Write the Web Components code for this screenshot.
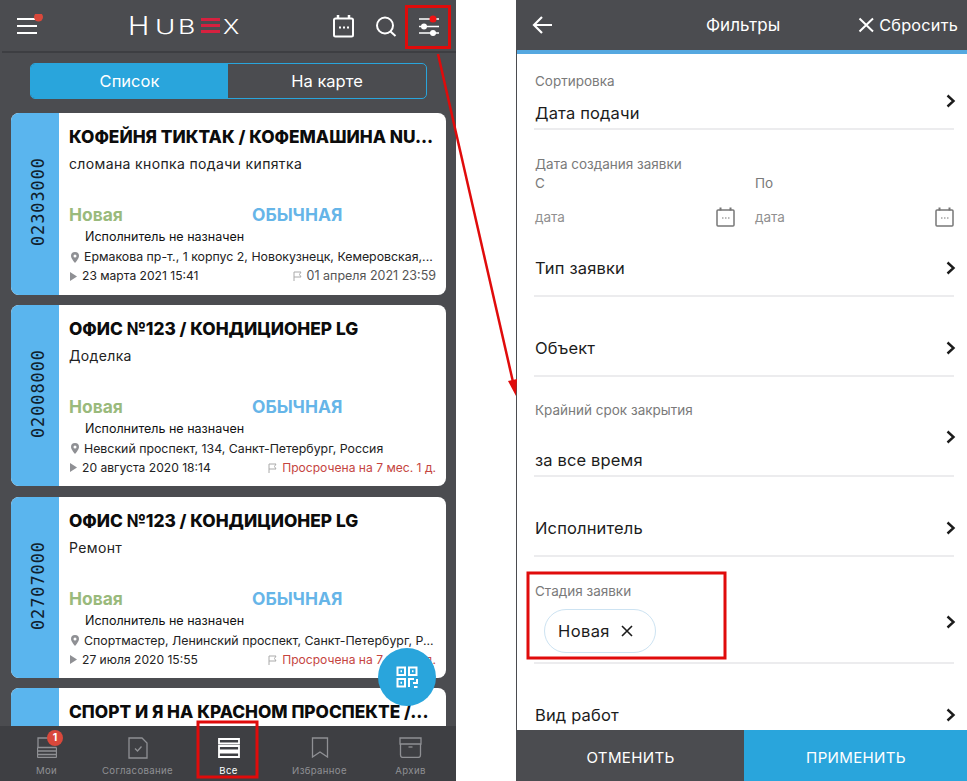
<!DOCTYPE html>
<html lang="ru">
<head>
<meta charset="utf-8">
<title>Hubex</title>
<style>
  html, body { margin: 0; padding: 0; background: #fff; }
  body { width: 967px; height: 781px; overflow: hidden; font-family: Inter, "Noto Sans", sans-serif; }
</style>
</head>
<body>
<hubex-screens>
  <list-panel slot="left">
    <task-card number="02303000" addr="Ермакова пр-т., 1 корпус 2, Новокузнецк, Кемеровская,..." created="23 марта 2021 15:41" due="01 апреля 2021 23:59">
      КОФЕЙНЯ ТИКТАК / КОФЕМАШИНА NU...
      <span slot="desc">сломана кнопка подачи кипятка</span>
    </task-card>
    <task-card number="02008000" addr="Невский проспект, 134, Санкт-Петербург, Россия" created="20 августа 2020 18:14" due="Просрочена на 7 мес. 1 д." overdue>
      ОФИС №123 / КОНДИЦИОНЕР LG
      <span slot="desc">Доделка</span>
    </task-card>
    <task-card number="02707000" addr="Спортмастер, Ленинский проспект, Санкт-Петербург, Р..." created="27 июля 2020 15:55" due="Просрочена на 7 мес. 1 д." overdue>
      ОФИС №123 / КОНДИЦИОНЕР LG
      <span slot="desc">Ремонт</span>
    </task-card>
    <task-card number="" addr="" created="" due="">
      СПОРТ И Я НА КРАСНОМ ПРОСПЕКТЕ /...
    </task-card>
  </list-panel>
  <filter-panel slot="right">
    <filter-row label="Сортировка" value="Дата подачи" height="76" pad="5" chev="15"></filter-row>
    <date-range></date-range>
    <filter-row value="Тип заявки" height="57" pad="17" chev="3"></filter-row>
    <filter-row value="Объект" height="80" pad="17" chev="3"></filter-row>
    <filter-row label="Крайний срок закрытия" value="за все время" height="100" gap="32" pad="5" chev="26"></filter-row>
    <filter-row value="Исполнитель" height="80" pad="17" chev="3"></filter-row>
    <filter-row label="Стадия заявки" height="107" gap="12" pad="9" chev="24"><stage-chip>Новая</stage-chip></filter-row>
    <filter-row value="Вид работ" height="80" pad="17" chev="3" flat></filter-row>
  </filter-panel>
</hubex-screens>

<script>
const SANS = 'Inter, "Noto Sans", sans-serif';

class HubexScreens extends HTMLElement {
  constructor() {
    super();
    this.attachShadow({ mode: 'open' });
    this.shadowRoot.innerHTML = `
      <style>
        :host { display: flex; position: relative; width: 967px; height: 781px; overflow: hidden; }
        ::slotted([slot=left]) { width: 456px; flex: none; }
        ::slotted([slot=right]) { width: 451px; flex: none; margin-left: 60px; }
        svg { position: absolute; left: 0; top: 0; pointer-events: none; }
      </style>
      <slot name="left"></slot>
      <slot name="right"></slot>
      <svg width="967" height="781" fill="none" stroke="#e00b0b" stroke-width="3">
        <rect x="406.5" y="6.5" width="43" height="41"/>
        <rect x="198" y="722" width="59" height="55"/>
        <rect x="528" y="573" width="197" height="85"/>
        <path d="M438 54 L513 382" stroke-width="2.5"/>
        <path d="M516 396 L508 381 L517 379 Z" fill="#e00b0b" stroke="none"/>
      </svg>`;
  }
}

class ListPanel extends HTMLElement {
  constructor() {
    super();
    this.attachShadow({ mode: 'open' });
    this.shadowRoot.innerHTML = `
      <style>
        :host { display: flex; flex-direction: column; position: relative; height: 781px; background: #4b4c50; overflow: hidden; font-family: ${SANS}; }
        header { flex: none; height: 51px; position: relative; border-bottom: 2px solid #3d3e42; margin-left: 2px; }
        header > * { position: absolute; }
        .burger { left: 15px; top: 14px; }
        hubex-logo { left: 126px; top: 12px; }
        .cal { left: 329px; top: 14px; }
        .search { left: 372px; top: 14px; }
        .sliders { left: 413px; top: 14px; }
        .toggle { flex: none; box-sizing: border-box; display: grid; grid-template-columns: 197px 1fr; height: 36px; margin: 10px 29px 14px 30px; border: 1px solid #29a5dc; border-radius: 5px; overflow: hidden; color: #fff; font-size: 16.500px; }
        .toggle div { display: flex; align-items: center; justify-content: center; }
        .toggle .on { background: #29a5dc; }
        .list { flex: 1; min-height: 0; overflow: hidden; display: flex; flex-direction: column; gap: 10.300px; padding: 0 10px 0 11px; }
        nav { flex: none; height: 55px; box-sizing: border-box; padding-left: 1px; display: grid; grid-template-columns: repeat(5, 91px); background: #3e3f43; }
        .fab { position: absolute; left: 378px; top: 648px; width: 58px; height: 58px; border-radius: 50%; background: #29a5dc; display: flex; align-items: center; justify-content: center; }
      </style>
      <header>
        <svg class="burger" width="32" height="24" fill="none">
          <path d="M0 5H18M0 12H20M0 19H20" stroke="#fff" stroke-width="2"/>
          <circle cx="21.500" cy="3" r="4.500" fill="#d9483b"/>
        </svg>
        <hubex-logo></hubex-logo>
        <svg class="cal" width="24" height="26" fill="none" stroke="#fff" stroke-width="2">
          <rect x="3" y="4.500" width="19" height="18" rx="1.500"/>
          <path d="M7 1V5M18 1V5" stroke-width="2.500"/>
          <path d="M8 13.500H10M12 13.500H14M16 13.500H18" stroke-width="2"/>
        </svg>
        <svg class="search" width="24" height="26" fill="none" stroke="#fff" stroke-width="2">
          <circle cx="11" cy="11.500" r="8"/>
          <path d="M16.500 17.500L21.500 22"/>
        </svg>
        <svg class="sliders" width="28" height="26" fill="none">
          <path d="M4 5H24M4 12.500H24M4 19H24" stroke="#fff" stroke-width="1.500"/>
          <circle cx="9" cy="12.500" r="3" fill="#fff"/>
          <circle cx="18" cy="19" r="3" fill="#fff"/>
          <circle cx="18" cy="5" r="3.500" fill="#f01414"/>
        </svg>
      </header>
      <div class="toggle"><div class="on">Список</div><div>На карте</div></div>
      <div class="list"><slot></slot></div>
      <nav>
        <tab-item label="Мои" badge="1" icon="mine"></tab-item>
        <tab-item label="Согласование" icon="doc"></tab-item>
        <tab-item label="Все" icon="all" active></tab-item>
        <tab-item label="Избранное" icon="mark"></tab-item>
        <tab-item label="Архив" icon="box"></tab-item>
      </nav>
      <div class="fab">
        <svg width="22" height="22" fill="none" stroke="#fff" stroke-width="2">
          <rect x="1.500" y="1.500" width="7.500" height="7.500"/>
          <rect x="13" y="1.500" width="7.500" height="7.500"/>
          <rect x="1.500" y="13" width="7.500" height="7.500"/>
          <path d="M13 21V13H18M21 13V17H17M18 21H21.500"/>
          <path d="M4.500 5.200H6M16 5.200H17.500M4.500 16.700H6" stroke-width="2"/>
        </svg>
      </div>`;
  }
}

class HubexLogo extends HTMLElement {
  constructor() {
    super();
    this.attachShadow({ mode: 'open' });
    this.shadowRoot.innerHTML = `
      <style>
        :host { display: flex; align-items: flex-end; height: 24px; color: #fff; font: 300 20.500px/19px ${SANS}; }
        span { display: block; height: 19px; transform-origin: 0 100%; }
        .h { width: 28px; font-size: 25px; transform: scaleX(1.150); }
        .u { width: 23px; margin-left: -1px; transform: scaleX(1.350); }
        .b { width: 21px; transform: scaleX(1.300); }
        .e { width: 19px; height: 15px; margin: 0 3px 3px 2px; background: repeating-linear-gradient(#d6213f 0 3px, transparent 3px 6px); transform: none; }
        .x { transform: scaleX(1.200); }
      </style>
      <span class="h">H</span><span class="u">U</span><span class="b">B</span><span class="e"></span><span class="x">X</span>`;
  }
}

const TAB_ICONS = {
  mine: `<svg width="20" height="21" stroke-width="1.300"><path d="M1 10.500V1H17V3"/><path d="M.500 10.500H19.500M.500 14H19.500M.500 17.500H19.500M.500 20.500H19.500M.500 10.500V20.500M19.500 10.500V20.500"/></svg>`,
  doc: `<svg width="20" height="22" stroke-width="1.300"><path d="M1 1H14L19 6V21H1Z"/><path d="M7 11.500L9.500 14L13.500 9.500"/></svg>`,
  all: `<svg width="22" height="21" stroke-width="1.800"><path d="M1 2H21V6.500H1ZM1 9H21V13.500H1ZM1 15.500H21V20H1Z"/></svg>`,
  mark: `<svg width="18" height="21" stroke-width="1.300"><path d="M1.500 1H16.500V20L9 15L1.500 20Z"/></svg>`,
  box: `<svg width="23" height="21" stroke-width="1.300"><path d="M1 1H22V7H1ZM1.500 7V18Q1.500 20.500 4 20.500H19Q21.500 20.500 21.500 18V7"/><path d="M9.500 10H13.500"/></svg>`
};

class TabItem extends HTMLElement {
  connectedCallback() {
    if (this.shadowRoot) return;
    this.attachShadow({ mode: 'open' });
    const active = this.hasAttribute('active');
    const badge = this.getAttribute('badge');
    this.shadowRoot.innerHTML = `
      <style>
        :host { display: flex; flex-direction: column; align-items: center; position: relative; color: ${active ? '#fff' : '#8f9094'}; font: 400 9.600px/12px ${SANS}; }
        .icon { margin-top: 11px; height: 21px; display: flex; align-items: center; justify-content: center; }
        svg { stroke: currentColor; fill: none; display: block; }
        .name { margin-top: 7px; white-space: nowrap; letter-spacing: .35px; }
        .badge { position: absolute; left: 46px; top: 4px; width: 16px; height: 16px; border-radius: 50%; background: #d9483b; color: #fff; font: 700 10.500px/16px ${SANS}; text-align: center; }
      </style>
      <div class="icon">${TAB_ICONS[this.getAttribute('icon')]}</div>
      <div class="name">${this.getAttribute('label')}</div>
      ${badge ? `<div class="badge">${badge}</div>` : ''}`;
  }
}

class TaskCard extends HTMLElement {
  connectedCallback() {
    if (this.shadowRoot) return;
    this.attachShadow({ mode: 'open' });
    const get = name => this.getAttribute(name) || '';
    const overdue = this.hasAttribute('overdue');
    const stub = !get('number');
    this.shadowRoot.innerHTML = `
      <style>
        :host { display: flex; flex: none; height: 181.500px; border-radius: 8px; background: #fff; overflow: hidden; font-family: ${SANS}; color: #111; }
        .num { flex: none; box-sizing: border-box; width: 48px; padding-left: 7px; background: #5ab5ee; display: flex; align-items: center; justify-content: center; }
        .num span { writing-mode: vertical-rl; transform: rotate(180deg); font: 400 17px/1 "DejaVu Sans Mono", monospace; letter-spacing: .9px; color: #10202c; margin-top: -4px; }
        .body { flex: 1; min-width: 0; padding: 14px 10px 0 10px; display: flex; flex-direction: column; }
        .title { font-size: 17.300px; line-height: 20px; font-weight: 800; white-space: nowrap; color: #0c0c0c; }
        .desc { font-size: 14px; line-height: 18px; margin-top: 8px; height: 18px; color: #222; letter-spacing: .36px; }
        .state { display: flex; margin-top: 32px; font-size: 17.400px; line-height: 20px; font-weight: 700; }
        .new { width: 183px; color: #9aba7c; }
        .prio { color: #66b5e8; }
        .who { font-size: 12.500px; line-height: 16px; margin: 4px 0 0 16px; }
        .addr { font-size: 12.350px; line-height: 16px; margin-top: 4px; white-space: nowrap; display: flex; align-items: center; gap: 5px; padding-left: 2px; color: #222; }
        .dates { font-size: 12.100px; line-height: 16px; margin-top: 3px; display: flex; align-items: center; white-space: nowrap; }
        .dates svg { flex: none; }
        .from { margin-left: 4px; color: #222; }
        .due { margin-left: auto; display: flex; align-items: center; gap: 5px; color: ${overdue ? '#c5453f' : '#555'}; font-size: ${overdue ? 12.1 : 12.5}px; }
      </style>
      <div class="num"><span>${get('number')}</span></div>
      <div class="body">
        <div class="title"><slot></slot></div>
        ${stub ? '' : `
        <div class="desc"><slot name="desc"></slot></div>
        <div class="state"><div class="new">Новая</div><div class="prio">ОБЫЧНАЯ</div></div>
        <div class="who">Исполнитель не назначен</div>
        <div class="addr">
          <svg width="8" height="11" viewBox="0 0 8 11"><path d="M4 0a4 4 0 0 1 4 4c0 2.500-4 7-4 7S0 6.500 0 4a4 4 0 0 1 4-4zm0 2.500a1.500 1.500 0 1 0 0 3 1.500 1.500 0 0 0 0-3z" fill="#8f9094" fill-rule="evenodd"/></svg>
          <span>${get('addr')}</span>
        </div>
        <div class="dates">
          <svg width="9" height="9"><path d="M1 0L8 4.500L1 9Z" fill="#8f9094"/></svg>
          <span class="from">${get('created')}</span>
          <span class="due">
            <svg width="9" height="10" fill="none"><path d="M1 10V1H8L6.500 3.500L8 6H1" stroke="#aaa" stroke-width="1"/></svg>
            <span>${get('due')}</span>
          </span>
        </div>`}
      </div>`;
  }
}

class FilterPanel extends HTMLElement {
  constructor() {
    super();
    this.attachShadow({ mode: 'open' });
    this.shadowRoot.innerHTML = `
      <style>
        :host { display: flex; flex-direction: column; position: relative; height: 781px; background: #fff; border-left: 1px solid #4b4c50; font-family: ${SANS}; overflow: hidden; }
        header { flex: none; height: 50px; background: #4b4c50; color: #fff; display: flex; align-items: center; position: relative; }
        .back { margin-left: 15px; }
        .title { position: absolute; left: 189px; top: 15px; line-height: 20px; font-size: 17px; }
        .reset { margin-left: auto; margin-right: 10px; display: flex; align-items: center; gap: 4px; font-size: 16.300px; letter-spacing: .2px; }
        .stripe { flex: none; height: 4px; background: #55a8e0; }
        .rows { flex: 1; min-height: 0; overflow: hidden; padding: 0 14px 0 17px; }
        footer { flex: none; height: 51px; display: grid; grid-template-columns: 227px 1fr; color: #fff; font-size: 15.100px; letter-spacing: .3px; }
        footer div { display: flex; align-items: center; justify-content: center; padding-top: 3px; }
        .cancel { background: #4b4c50; }
        .apply { background: #29a5dc; }
      </style>
      <header>
        <svg class="back" width="20" height="20" fill="none" stroke="#fff" stroke-width="2.200"><path d="M20 10H2M10 2L2 10L10 18"/></svg>
        <div class="title">Фильтры</div>
        <div class="reset">
          <svg width="17" height="16" fill="none" stroke="#fff" stroke-width="2"><path d="M1.500 1.500L15 14.500M15 1.500L1.500 14.500"/></svg>
          <span>Сбросить</span>
        </div>
      </header>
      <div class="stripe"></div>
      <div class="rows"><slot></slot></div>
      <footer><div class="cancel">ОТМЕНИТЬ</div><div class="apply">ПРИМЕНИТЬ</div></footer>`;
  }
}

class FilterRow extends HTMLElement {
  connectedCallback() {
    if (this.shadowRoot) return;
    this.attachShadow({ mode: 'open' });
    const label = this.getAttribute('label');
    const value = this.getAttribute('value');
    const gap = this.getAttribute('gap') || 14;
    this.shadowRoot.innerHTML = `
      <style>
        :host { display: flex; align-items: flex-end; box-sizing: border-box; height: ${this.getAttribute('height')}px; border-bottom: 2px solid ${this.hasAttribute('flat') ? 'transparent' : '#ececee'}; padding-bottom: ${this.getAttribute('pad')}px; color: #1c1c1c; }
        .text { flex: 1; min-width: 0; padding-left: 1px; }
        .label { font-size: 13.500px; line-height: 16px; color: #7a7a7a; margin-bottom: ${gap}px; }
        .value { font-size: 16.500px; line-height: 20px; letter-spacing: .15px; }
        svg { flex: none; margin: 0 -2px ${this.getAttribute('chev')}px 0; }
      </style>
      <div class="text">
        ${label ? `<div class="label">${label}</div>` : ''}
        ${value ? `<div class="value">${value}</div>` : ''}
        <slot></slot>
      </div>
      <svg width="10" height="14" fill="none" stroke="#1c1c1c" stroke-width="2.400"><path d="M1.500 1.500L7.500 7L1.500 12.500"/></svg>`;
  }
}

class DateRange extends HTMLElement {
  constructor() {
    super();
    this.attachShadow({ mode: 'open' });
    const icon = `<svg width="19" height="20" fill="none" stroke="#777" stroke-width="1.500"><rect x="1" y="3" width="17" height="16" rx="1"/><path d="M4.500 .5V3.500M14.500 .5V3.500" stroke-width="2"/><path d="M6 11H7.500M9 11H10.500M12 11H13.500" stroke-width="1"/></svg>`;
    this.shadowRoot.innerHTML = `
      <style>
        :host { display: block; height: 110px; box-sizing: border-box; padding: 26px 0 0 1px; color: #7a7a7a; font-size: 13.500px; line-height: 16px; }
        .cols { display: grid; grid-template-columns: 220px 1fr; margin-top: 3px; }
        .hint { height: 32px; }
        .field { display: flex; align-items: center; justify-content: space-between; height: 20px; color: #909090; }
        .cols > div:first-child .field { padding-right: 20px; }
      </style>
      <div>Дата создания заявки</div>
      <div class="cols">
        <div><div class="hint">С</div><div class="field"><span>дата</span>${icon}</div></div>
        <div><div class="hint">По</div><div class="field"><span>дата</span>${icon}</div></div>
      </div>`;
  }
}

class StageChip extends HTMLElement {
  constructor() {
    super();
    this.attachShadow({ mode: 'open' });
    this.shadowRoot.innerHTML = `
      <style>
        :host { display: inline-flex; align-items: center; gap: 11px; box-sizing: border-box; height: 44px; width: 112px; margin: -2px 0 0 9px; padding-left: 13px; border: 1px solid #cde3f2; border-radius: 22px; font-size: 16.500px; letter-spacing: .4px; color: #1c1c1c; }
      </style>
      <slot></slot>
      <svg width="12" height="12" fill="none" stroke="#1c1c1c" stroke-width="1.600"><path d="M1 1L11 11M11 1L1 11"/></svg>`;
  }
}

customElements.define('hubex-screens', HubexScreens);
customElements.define('list-panel', ListPanel);
customElements.define('hubex-logo', HubexLogo);
customElements.define('tab-item', TabItem);
customElements.define('task-card', TaskCard);
customElements.define('filter-panel', FilterPanel);
customElements.define('filter-row', FilterRow);
customElements.define('date-range', DateRange);
customElements.define('stage-chip', StageChip);
</script>
</body>
</html>
